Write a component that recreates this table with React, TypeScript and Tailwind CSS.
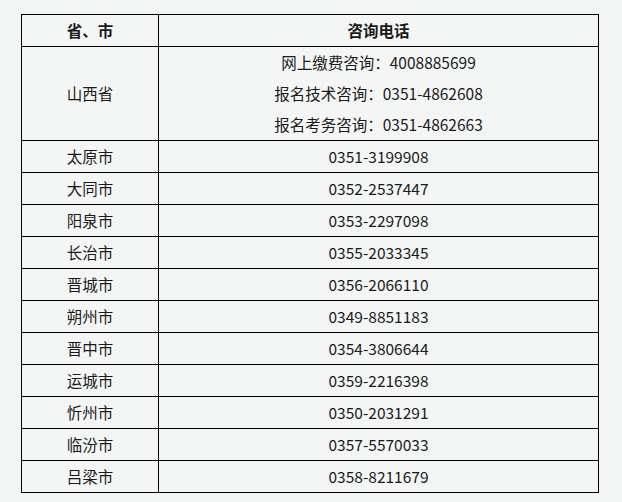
const rows: [string, string][] = [
  ["太原市", "0351-3199908"],
  ["大同市", "0352-2537447"],
  ["阳泉市", "0353-2297098"],
  ["长治市", "0355-2033345"],
  ["晋城市", "0356-2066110"],
  ["朔州市", "0349-8851183"],
  ["晋中市", "0354-3806644"],
  ["运城市", "0359-2216398"],
  ["忻州市", "0350-2031291"],
  ["临汾市", "0357-5570033"],
  ["吕梁市", "0358-8211679"],
];

export default function App() {
  return (
    <div
      className="min-h-[502px] w-full bg-[#f4f6f5] pl-[21px] pt-[14px] text-[15.5px] text-[#1a1a1a]"
      style={{ fontFamily: '"Noto Sans CJK SC", "Noto Sans", sans-serif' }}
    >
      <table className="w-[578px] table-fixed border-collapse border border-black">
        <colgroup>
          <col className="w-[137px]" />
          <col />
        </colgroup>
        <thead>
          <tr className="h-[32px]">
            <th className="border border-black text-center font-bold">省、市</th>
            <th className="border border-black text-center font-bold">咨询电话</th>
          </tr>
        </thead>
        <tbody>
          <tr className="h-[94px]">
            <td className="border border-black text-center">山西省</td>
            <td className="border border-black text-center leading-[31px]">
              <p>网上缴费咨询：4008885699</p>
              <p>报名技术咨询：0351-4862608</p>
              <p>报名考务咨询：0351-4862663</p>
            </td>
          </tr>
          {rows.map(([city, phone]) => (
            <tr key={city} className="h-[32px]">
              <td className="border border-black text-center">{city}</td>
              <td className="border border-black text-center">{phone}</td>
            </tr>
          ))}
        </tbody>
      </table>
    </div>
  );
}
